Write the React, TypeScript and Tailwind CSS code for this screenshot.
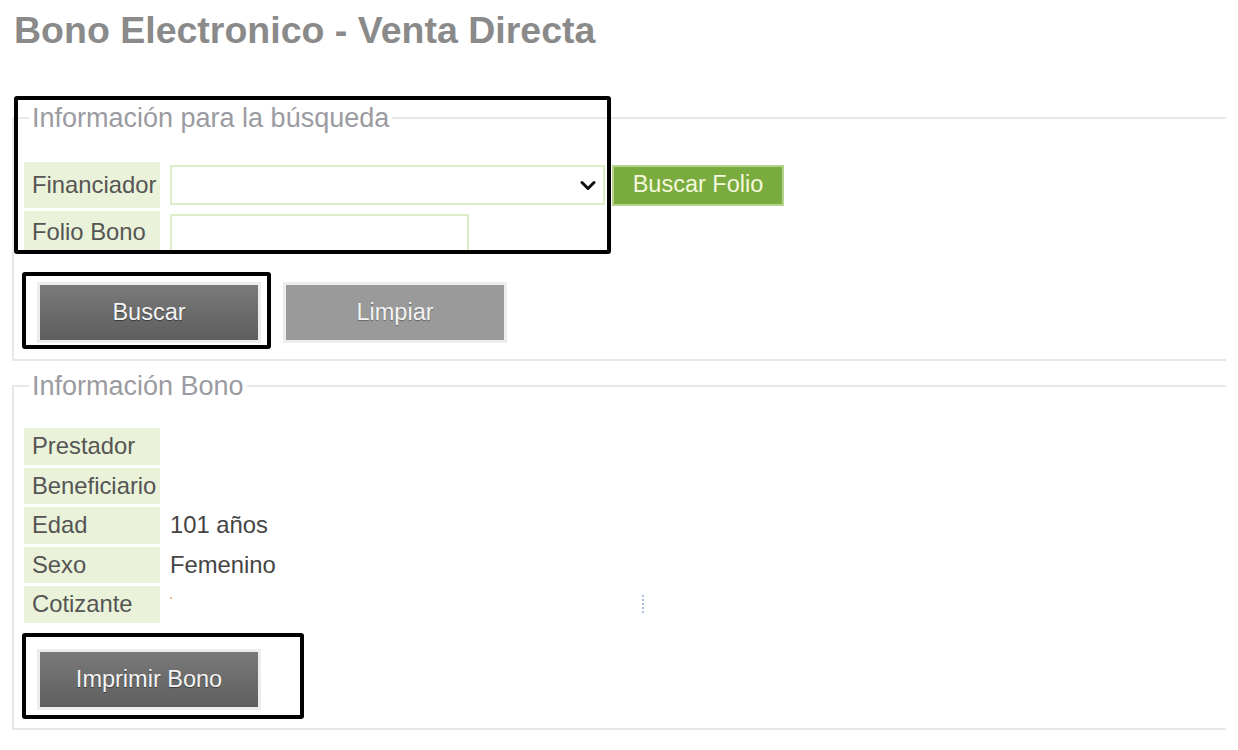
import React from "react";

const LABEL = "flex items-center bg-[#eaf3d9] pl-[8px] w-[136px] shrink-0 text-[23.8px] text-[#555555]";

function GrayButton({ label, tone }: { label: string; tone: "dark" | "light" }) {
  return (
    <div className="border-[3px] border-[#ededed]">
      <div
        className={
          tone === "dark"
            ? "flex h-[55px] w-[218px] items-center justify-center bg-gradient-to-b from-[#7a7a7a] to-[#5e5e5e] text-[23.5px] text-[#f4f4f4] [text-shadow:0_1px_1px_rgba(0,0,0,0.45)]"
            : "flex h-[55px] w-[218px] items-center justify-center bg-[#9a9a9a] text-[23.5px] text-[#f4f4f4] [text-shadow:0_1px_1px_rgba(0,0,0,0.35)]"
        }
      >
        {label}
      </div>
    </div>
  );
}

function InfoRow({ label, value, children }: { label: string; value?: string; children?: React.ReactNode }) {
  return (
    <div className="flex h-[36.5px] gap-[10px]">
      <div className={LABEL}>{label}</div>
      <div className="flex flex-1 items-center text-[23.8px] text-[#444444]">
        {value}
        {children}
      </div>
    </div>
  );
}

export default function App() {
  return (
    <div className="relative h-[750px] w-[1238px] overflow-hidden bg-white font-['Liberation_Sans',Arial,sans-serif]">
      <h1 className="ml-[14px] pt-[12px] text-[37.5px] font-bold leading-[37px] text-[#8a8a8a]">
        Bono Electronico - Venta Directa
      </h1>

      {/* Búsqueda */}
      <fieldset className="ml-[12px] mt-[53.5px] w-[1214px] border-2 border-r-0 border-[#e8e8e8] pb-[16px] pl-[10px]">
        <legend className="ml-[5px] px-[3px] text-[27px] leading-[31px] text-[#9b9ba2]">
          Información para la búsqueda
        </legend>

        <div className="mt-[28.5px] flex flex-col gap-[3px]">
          <div className="flex h-[46px] items-center gap-[10px]">
            <div className={LABEL + " h-full"}>Financiador</div>
            <div className="flex h-[40px] w-[435px] items-center justify-end border-2 border-[#deedc9] bg-white pr-[7px]">
              <svg width="16" height="11" viewBox="0 0 16 11" fill="none">
                <path d="M2 2.5l6 6 6-6" stroke="#111" strokeWidth="3" strokeLinecap="round" strokeLinejoin="round" />
              </svg>
            </div>
            <div className="ml-[-3px] flex h-[41px] w-[172px] items-center justify-center border-2 border-[#b4d48e] bg-[#7aab3e] text-[23.5px] text-[#f3f8dc]">
              Buscar Folio
            </div>
          </div>
          <div className="flex h-[42px] gap-[10px]">
            <div className={LABEL + " h-full"}>Folio Bono</div>
            <div className="mt-[3px] h-[39px] w-[299px] border-2 border-b-0 border-[#deedc9] bg-white" />
          </div>
        </div>

        <div className="ml-[13px] mt-[29px] flex gap-[22px]">
          <GrayButton label="Buscar" tone="dark" />
          <GrayButton label="Limpiar" tone="light" />
        </div>
      </fieldset>

      {/* Bono */}
      <fieldset className="ml-[12px] mt-[9.5px] w-[1214px] border-2 border-r-0 border-[#e8e8e8] pb-[18px] pl-[10px]">
        <legend className="ml-[5px] px-[3px] text-[27px] leading-[31px] text-[#9b9ba2]">
          Información Bono
        </legend>

        <div className="mt-[26.5px] flex flex-col gap-[3px]">
          <InfoRow label="Prestador" />
          <InfoRow label="Beneficiario" />
          <InfoRow label="Edad" value="101 años" />
          <InfoRow label="Sexo" value="Femenino" />
          <InfoRow label="Cotizante">
            <span className="mb-[12px] h-[2px] w-[2px] bg-[#f2b98a]" />
            <span className="ml-[470px] h-[18px] border-l-2 border-dotted border-[#a9bde0]" />
          </InfoRow>
        </div>

        <div className="ml-[13px] mt-[26.5px] flex">
          <GrayButton label="Imprimir Bono" tone="dark" />
        </div>
      </fieldset>

      {/* annotation boxes */}
      <div className="absolute left-[14px] top-[96px] h-[158px] w-[597px] rounded-[3px] border-4 border-black" />
      <div className="absolute left-[22px] top-[272px] h-[77px] w-[249px] rounded-[3px] border-4 border-black" />
      <div className="absolute left-[22px] top-[633px] h-[86px] w-[282px] rounded-[3px] border-4 border-black" />
    </div>
  );
}
